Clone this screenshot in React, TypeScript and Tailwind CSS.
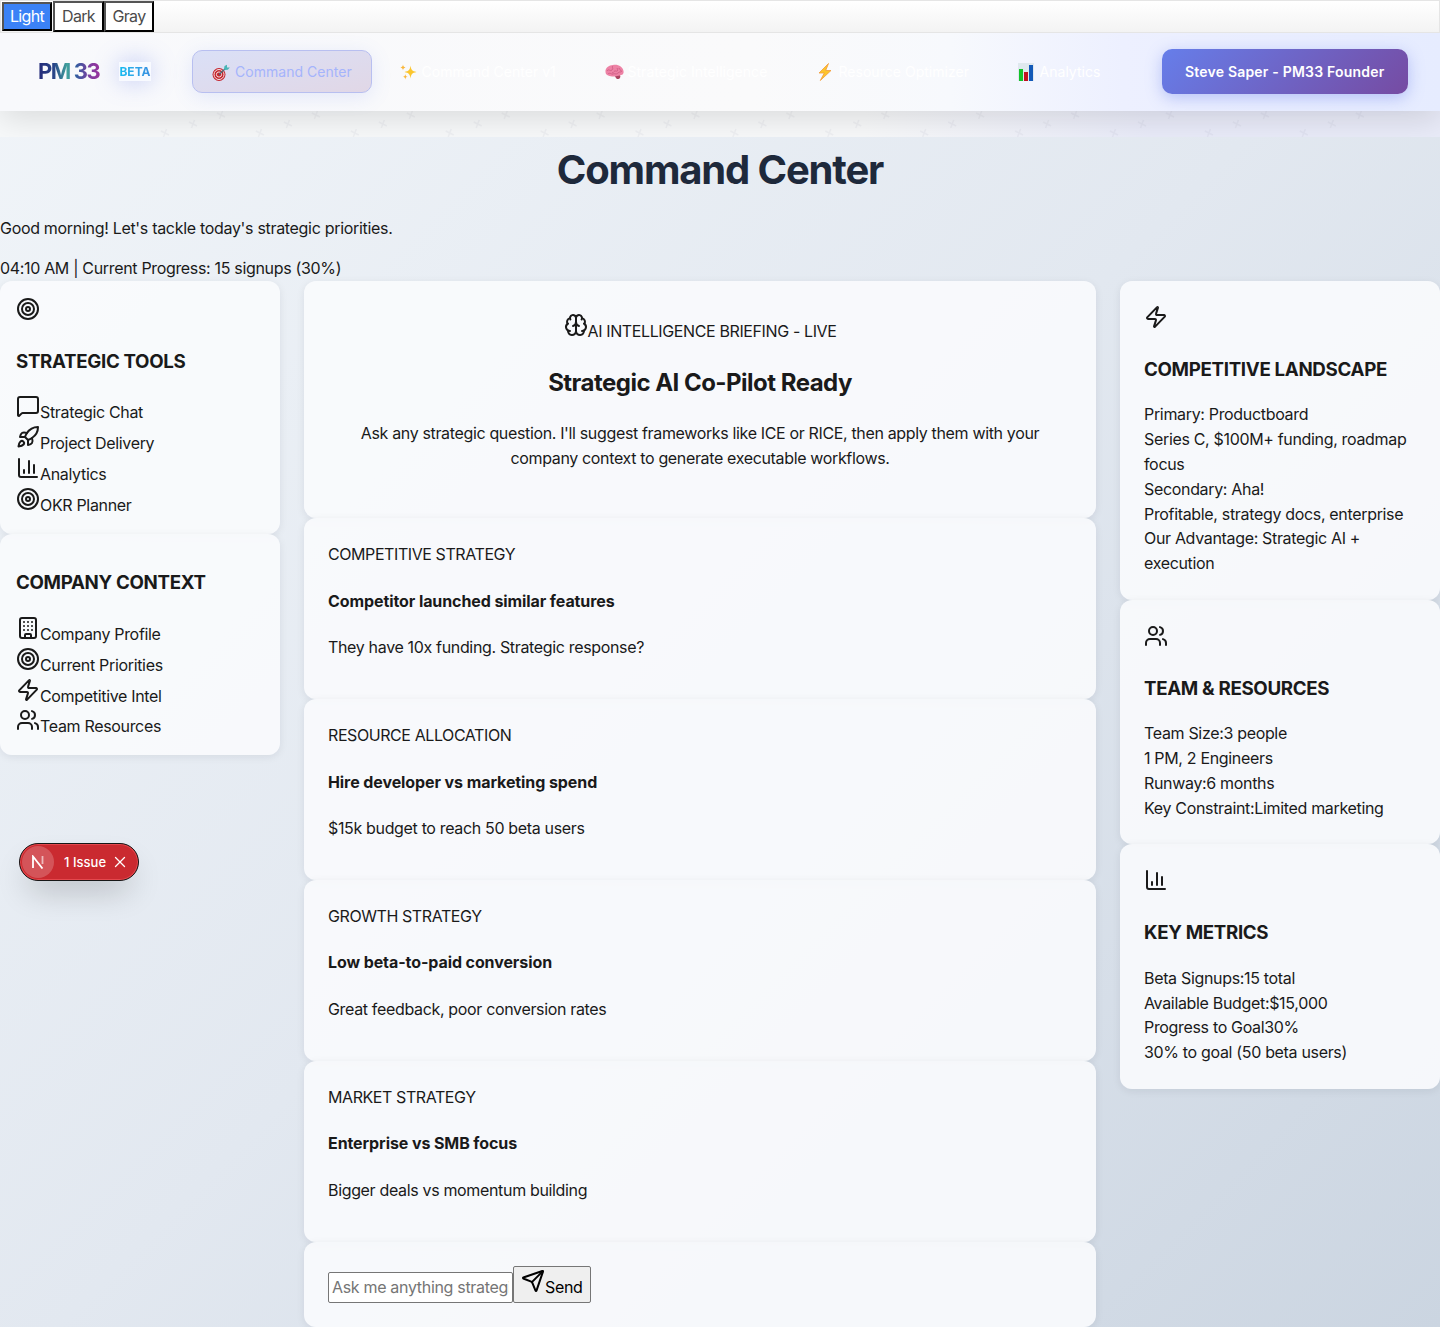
import React from 'react';
import { Target, MessageSquare, Rocket, Building, Zap, Users, Brain, Send, X } from 'lucide-react';

const row = 'h-[30.8px] whitespace-nowrap';
const ico = 'inline align-baseline';
const card = 'rounded-xl bg-[#f9fbfd]/90 shadow-[0_2px_8px_rgba(15,23,42,0.08)]';
const h3 = 'my-[18.72px] text-[18.72px] leading-[29px] font-bold tracking-[-0.32px] whitespace-nowrap';

function ChartIcon() {
  return (
    <svg width="24" height="24" viewBox="0 0 24 24" fill="none" stroke="currentColor" strokeWidth="2" strokeLinecap="round" strokeLinejoin="round" className={ico}>
      <path d="M3 3v16a2 2 0 0 0 2 2h16M18 17V9M13 17V5M8 17v-3" />
    </svg>
  );
}

function DartIcon() {
  return (
    <svg width="18" height="18" viewBox="0 0 18 18" className="shrink-0">
      <circle cx="7" cy="11.5" r="6.500" fill="#c5232c" />
      <circle cx="7" cy="11.5" r="5" fill="none" stroke="#f5e5e5" strokeWidth="1" />
      <circle cx="7" cy="11.5" r="2.600" fill="none" stroke="#f5e5e5" strokeWidth="1" />
      <path d="M7 11.500 14 5" stroke="#476d78" strokeWidth="1.2" />
      <path d="m12 6 .5-3L15 1.800v2.600l2.800.2-2 2.200-3 .3z" fill="#48b5b5" />
    </svg>
  );
}
function SparkIcon() {
  return (
    <svg width="18" height="18" viewBox="0 0 18 18" className="shrink-0" fill="#fbc62f">
      <path d="M10.500 2.500c.6 4.500 1.600 5.500 6 6.500-4.400 1-5.400 2-6 6.500-.6-4.500-1.600-5.500-6-6.500 4.400-1 5.400-2 6-6.500Z" />
      <path d="M3 1.500c.3 2 .8 2.500 2.500 3-1.700.5-2.200 1-2.500 3-.3-2-.8-2.500-2.500-3 1.700-.5 2.200-1 2.500-3ZM5.300 11c.3 1.900.8 2.400 2.400 2.800-1.600.4-2.100.9-2.400 2.800-.3-1.900-.8-2.400-2.400-2.800 1.600-.4 2.100-.9 2.400-2.800Z" fill="#f9b73c" />
    </svg>
  );
}
function PinkBrain() {
  return (
    <svg width="19" height="18" viewBox="0 0 19 18" className="shrink-0">
      <path d="M.500 9C0 5 4 2 8 2c5-1 10 2 10.500 6 .500 2-.500 4-2.500 4l-1 .500c1 2-1 4-3 3.500l-2-2.500C7 14 .500 13 .500 9Z" fill="#ed82a5" />
      <path d="M2 8c2-3 3 1 5-1S6 4 8 3M7 10c2 0 2-3 4-2s2-2 1-3M3 11c2-2 4 1 5 0s3 1 5-1 2 0 4-2M14 5c0 2 2 1 2 3" fill="none" stroke="#c9557d" strokeWidth=".7" />
      <path d="M10 13.500c1 0 3-1 5-1 1 2-1 4-3 3.500Z" fill="#a84460" />
    </svg>
  );
}
function BoltIcon() {
  return (
    <svg width="18" height="18" viewBox="0 0 18 18" className="shrink-0">
      <path d="M11.500.500 2 10h5.300l-4 7.500L14 7.500H8.700Z" fill="#fdc52c" stroke="#f29a38" strokeWidth=".8" />
    </svg>
  );
}
function BarsIcon() {
  return (
    <svg width="18" height="18" viewBox="0 0 18 18" className="shrink-0">
      <path d="M0 0h16v18H0z" fill="#dfe8ee" />
      <path d="M1 6h4v12H1z" fill="#13c22a" />
      <path d="M6 9h4v9H6z" fill="#c01220" />
      <path d="M11 2h4v16h-4z" fill="#1259b8" />
    </svg>
  );
}

const nav = [
  { label: 'Command Center v1', icon: <SparkIcon />, w: 'w-[195px]' },
  { label: 'Strategic Intelligence', icon: <PinkBrain />, w: 'w-[202px]' },
  { label: 'Resource Optimizer', icon: <BoltIcon />, w: 'w-[191px]' },
  { label: 'Analytics', icon: <BarsIcon />, w: 'w-[121px]' },
];

const prompts = [
  ['COMPETITIVE STRATEGY', 'Competitor launched similar features', 'They have 10x funding. Strategic response?'],
  ['RESOURCE ALLOCATION', 'Hire developer vs marketing spend', '$15k budget to reach 50 beta users'],
  ['GROWTH STRATEGY', 'Low beta-to-paid conversion', 'Great feedback, poor conversion rates'],
  ['MARKET STRATEGY', 'Enterprise vs SMB focus', 'Bigger deals vs momentum building'],
];

const marks = Array.from({ length: 13 }, (_, i) => 221 + i * 94.9);

export default function App() {
  return (
    <div className="relative h-[1327px] w-[1440px] overflow-hidden bg-[linear-gradient(135deg,#f1f5f9_0%,#e2e8f0_50%,#cbd5e1_100%)] font-['Inter',sans-serif] text-[16px] leading-[24.8px] tracking-[-0.33px] text-[#1a1a1a]">
      <div className="flex h-[33px] border border-[#e5e5e5] bg-gradient-to-b from-white to-[#f3f3f3] pl-px text-[16px] leading-[27px] tracking-[-0.65px] text-[#4b4b4b]">
        <button className="mt-px mr-px h-[29px] w-[50px] border-2 border-t-[#555] border-l-[#555] border-r-black border-b-black bg-[#3b82f6] leading-[25px] text-white">Light</button>
        <button className="h-[31px] w-[51px] border-2 border-t-[#555] border-l-[#555] border-r-black border-b-black bg-white">Dark</button>
        <button className="h-[31px] w-[50px] border-2 border-t-[#555] border-l-[#555] border-r-black border-b-black bg-white">Gray</button>
      </div>
      <div className="overflow-hidden">
        <header className="relative z-10 flex h-[78px] items-center bg-[linear-gradient(90deg,#f8f9fc_0%,#fafafb_52%,#f7f9fd_66%,#edf0ff_78%,#e6ecff_100%)] pr-8 pb-px pl-[38px] shadow-[0_8px_32px_rgba(0,0,0,0.12)]">
          <div className="mb-[2px] w-[64px] bg-[linear-gradient(90deg,#242a78_0%,#284488_25%,#41a49d_46%,#335da0_60%,#7b3fa0_80%,#a1309c_100%)] bg-clip-text text-[22px] leading-[26px] font-bold tracking-[-1.4px] whitespace-nowrap text-transparent">PM 33</div>
          <div className="ml-[17px] h-[19px] w-8 bg-[#f8faff] text-center shadow-[0_0_24px_rgba(102,126,234,0.4)]">
            <span className="block bg-gradient-to-r from-[#13bdf0] to-[#3a8fe0] bg-clip-text text-[12px] leading-[19px] font-bold tracking-normal text-transparent">BETA</span>
          </div>
          <nav className="ml-[41px] flex gap-[10px] text-[14px] leading-[22px] tracking-[0.002em]">
            <div className="flex h-[43px] w-[179.500px] items-center gap-[5px] rounded-[10px] border border-[#b8bff0] bg-gradient-to-br from-[#dae0f7] to-[#e1d7e6] pt-px pl-[19px] whitespace-nowrap text-[#a5b4fc] shadow-[0_4px_20px_rgba(102,126,234,0.15)]"><DartIcon />Command Center</div>
            {nav.map((n) => (
              <div key={n.label} className={`flex h-[44px] items-center gap-1 pl-[18px] whitespace-nowrap text-white ${n.w}`}>{n.icon}{n.label}</div>
            ))}
          </nav>
          <button className="ml-auto h-[45px] w-[246.500px] rounded-[10px] bg-[linear-gradient(135deg,#667eea,#764ba2)] pt-px text-[14px] font-semibold tracking-[0.2px] text-white shadow-[0_4px_16px_rgba(102,126,234,0.4)]">Steve Saper - PM33 Founder</button>
        </header>
        <div className="h-[26px] bg-[linear-gradient(90deg,#f7f9fa_0%,#f8f9fa_60%,#e9ebf9_80%,#e9ebf8_100%)]">
          <svg width="1440" height="26" viewBox="0 0 1440 26" fill="none" stroke="#8a90a0" strokeOpacity=".08" strokeWidth="1.500">
            {marks.map((x) => (
              <path key={x} d={`M${x - 4} 2l8 4M${x + 1.5} 0l-3 8M${x - 32} 11l8 4M${x - 26.5} 9l-3 8M${x - 60} 20l8 4M${x - 54.5} 18l-3 8`} />
            ))}
          </svg>
        </div>
      </div>
      <main>
        <h1 className="pt-[2px] text-center text-[40px] leading-[62px] font-bold tracking-[-1.16px] text-[#1e293b]">Command Center</h1>
        <p className="mt-[14.650px] tracking-[-0.31px]">Good morning! Let's tackle today's strategic priorities.</p>
        <div className="mt-4">04:10 AM | Current Progress: 15 signups (30%)</div>
        <div className="grid grid-cols-[280px_792px_320px] items-start gap-6">
          <aside>
            <section className={`${card} flow-root p-4`}>
              <div className={row}><Target className={ico} /></div>
              <h3 className={h3}>STRATEGIC TOOLS</h3>
              <div className={row}><MessageSquare className={ico} />Strategic Chat</div>
              <div className={row}><Rocket className={ico} />Project Delivery</div>
              <div className={row}><ChartIcon />Analytics</div>
              <div className={row}><Target className={ico} />OKR Planner</div>
            </section>
            <section className={`${card} flow-root p-4`}>
              <h3 className={h3}>COMPANY CONTEXT</h3>
              <div className={row}><Building className={ico} />Company Profile</div>
              <div className={row}><Target className={ico} />Current Priorities</div>
              <div className={row}><Zap className={ico} />Competitive Intel</div>
              <div className={row}><Users className={ico} />Team Resources</div>
            </section>
          </aside>
          <div>
            <section className={`${card} h-[237.200px] p-8 text-center`}>
              <div className={`${row} tracking-[-0.38px]`}><Brain className={ico} />AI INTELLIGENCE BRIEFING - LIVE</div>
              <h2 className="my-[19.92px] text-[24px] leading-[37.200px] font-bold tracking-[-0.52px]">Strategic AI Co-Pilot Ready</h2>
              <p className="tracking-[-0.35px]">Ask any strategic question. I'll suggest frameworks like ICE or RICE, then apply them with your<br />company context to generate executable workflows.</p>
            </section>
            {prompts.map((p) => (
              <section key={p[0]} className={`${card} h-[180.950px] p-6`}>
                <div className="tracking-[-0.42px]">{p[0]}</div>
                <h4 className="my-[21.400px] font-bold tracking-[-0.09px]">{p[1]}</h4>
                <p className="tracking-[-0.34px]">{p[2]}</p>
              </section>
            ))}
            <section className={`${card} flex h-[85px] items-start p-6`}>
              <input placeholder="Ask me anything strategic..." className="mt-[6px] h-[31px] w-[185px] rounded-[2px] border border-[#767676] bg-white px-[3px] pb-px tracking-[-0.32px] placeholder:text-[#757575]" />
              <button className="h-[37px] w-[78px] rounded-[2px] border border-[#767676] bg-[#efefef] text-left whitespace-nowrap text-black"><Send className={`${ico} ml-[7px]`} />Send</button>
            </section>
          </div>
          <aside>
            <section className={`${card} flow-root p-6`}>
              <div className={row}><Zap className={ico} /></div>
              <h3 className={h3}>COMPETITIVE LANDSCAPE</h3>
              <div>Primary: Productboard</div>
              <div className="whitespace-nowrap">Series C, $100M+ funding, roadmap<br />focus</div>
              <div>Secondary: Aha!</div>
              <div className="whitespace-nowrap">Profitable, strategy docs, enterprise</div>
              <div>Our Advantage: Strategic AI +<br />execution</div>
            </section>
            <section className={`${card} flow-root p-6`}>
              <div className={row}><Users className={ico} /></div>
              <h3 className={h3}>TEAM &amp; RESOURCES</h3>
              <div>Team Size:3 people</div>
              <div>1 PM, 2 Engineers</div>
              <div>Runway:6 months</div>
              <div>Key Constraint:Limited marketing</div>
            </section>
            <section className={`${card} flow-root p-6`}>
              <div className={row}><ChartIcon /></div>
              <h3 className={h3}>KEY METRICS</h3>
              <div>Beta Signups:15 total</div>
              <div>Available Budget:$15,000</div>
              <div>Progress to Goal30%</div>
              <div>30% to goal (50 beta users)</div>
            </section>
          </aside>
        </div>
      </main>
      <div className="absolute top-[843px] left-[19px] flex h-[38px] w-[120px] items-center rounded-full border border-[#171717] bg-[#ca2a30] pl-[2px] text-[13px] text-white shadow-[inset_0_0_0_1px_#e5484d,0_16px_32px_-8px_rgba(0,0,0,0.24)]">
        <span className="flex h-8 w-8 items-center justify-center rounded-full bg-white/20">
          <svg width="14" height="14" viewBox="0 0 14 14" fill="none" stroke="white" strokeWidth="1.800">
            <path d="M2 13V1.500l9.500 12" />
            <path d="M11.500 1v8" strokeOpacity=".6" />
          </svg>
        </span>
        <span className="ml-[10px] w-[43px] text-[13px] font-medium tracking-[0.03px] whitespace-nowrap">1 Issue</span>
        <X size={18} strokeWidth={1.7} className="ml-1" />
      </div>
    </div>
  );
}
